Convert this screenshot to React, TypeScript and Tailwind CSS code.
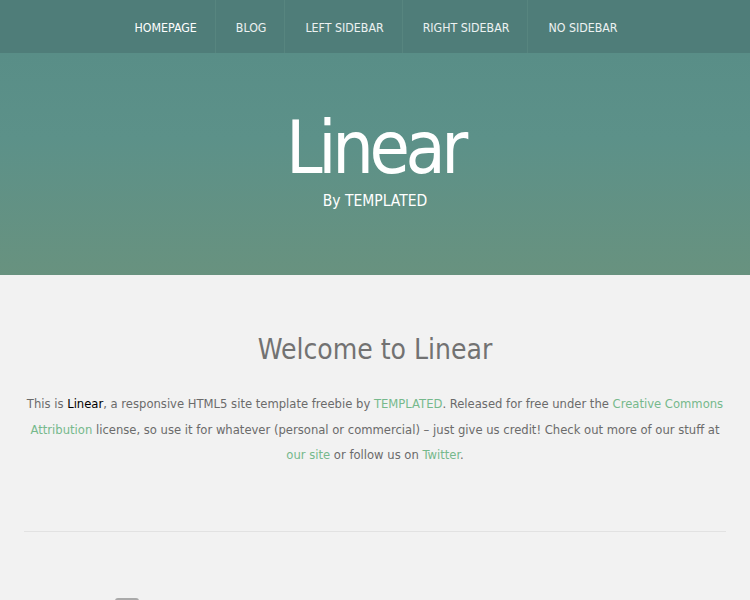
import { useState } from 'react'

const navItems = ['Homepage', 'Blog', 'Left Sidebar', 'Right Sidebar', 'No Sidebar']

function Nav() {
  const [active, setActive] = useState(0)
  return (
    <nav className="h-[53px] bg-[#4f7d79] flex justify-center">
      <ul className="flex">
        {navItems.map((item, i) => (
          <li key={item} className={i > 0 ? 'border-l border-[#57857f]' : ''}>
            <a
              href="#"
              onClick={e => { e.preventDefault(); setActive(i) }}
              className={`flex h-[53px] items-center pt-[3px] pl-[20px] pr-[18px] text-[12.3px] uppercase ${active === i ? 'text-white' : 'text-white/90'}`}
            >
              {item}
            </a>
          </li>
        ))}
      </ul>
    </nav>
  )
}

export default function App() {
  return (
    <div className="min-h-screen bg-[#f2f2f2] font-['DejaVu_Sans_Condensed','DejaVu_Sans',sans-serif]">
      <header className="bg-gradient-to-b from-[#578c86] via-[#5c9189] to-[#68927f]">
        <Nav />
        <div className="h-[222px] flex flex-col items-center pt-[58px]">
          <h1 className="text-[73px] leading-none text-white tracking-[-0.06em]">Linear</h1>
          <p className="mt-[6px] text-[15.5px] text-white">By TEMPLATED</p>
        </div>
      </header>

      <main className="max-w-[702px] mx-auto pt-[57px] pb-20 text-center">
        <h2 className="text-[28px] text-[#727272] leading-tight">Welcome to Linear</h2>
        <p className="mt-[24px] -mx-[3px] text-[12.9px] leading-[25.5px] text-[#6b6b6b]">
          This is <strong className="font-normal text-black">Linear</strong>, a responsive HTML5 site template freebie by{' '}
          <a href="#" className="text-[#76b98c]">TEMPLATED</a>. Released for free under the{' '}
          <a href="#" className="text-[#76b98c]">Creative Commons Attribution</a> license, so use it for whatever (personal or commercial) – just give us credit! Check out more of our stuff at{' '}
          <a href="#" className="text-[#76b98c]">our site</a> or follow us on{' '}
          <a href="#" className="text-[#76b98c]">Twitter</a>.
        </p>
        <hr className="mt-[63px] border-0 border-t border-[#e2e2e2]" />
        <div className="mt-[66px] flex justify-start pl-[91px]">
          <div className="w-[24px] h-[24px] rounded-[3px] bg-[#aaaaaa]" />
        </div>
      </main>
    </div>
  )
}
